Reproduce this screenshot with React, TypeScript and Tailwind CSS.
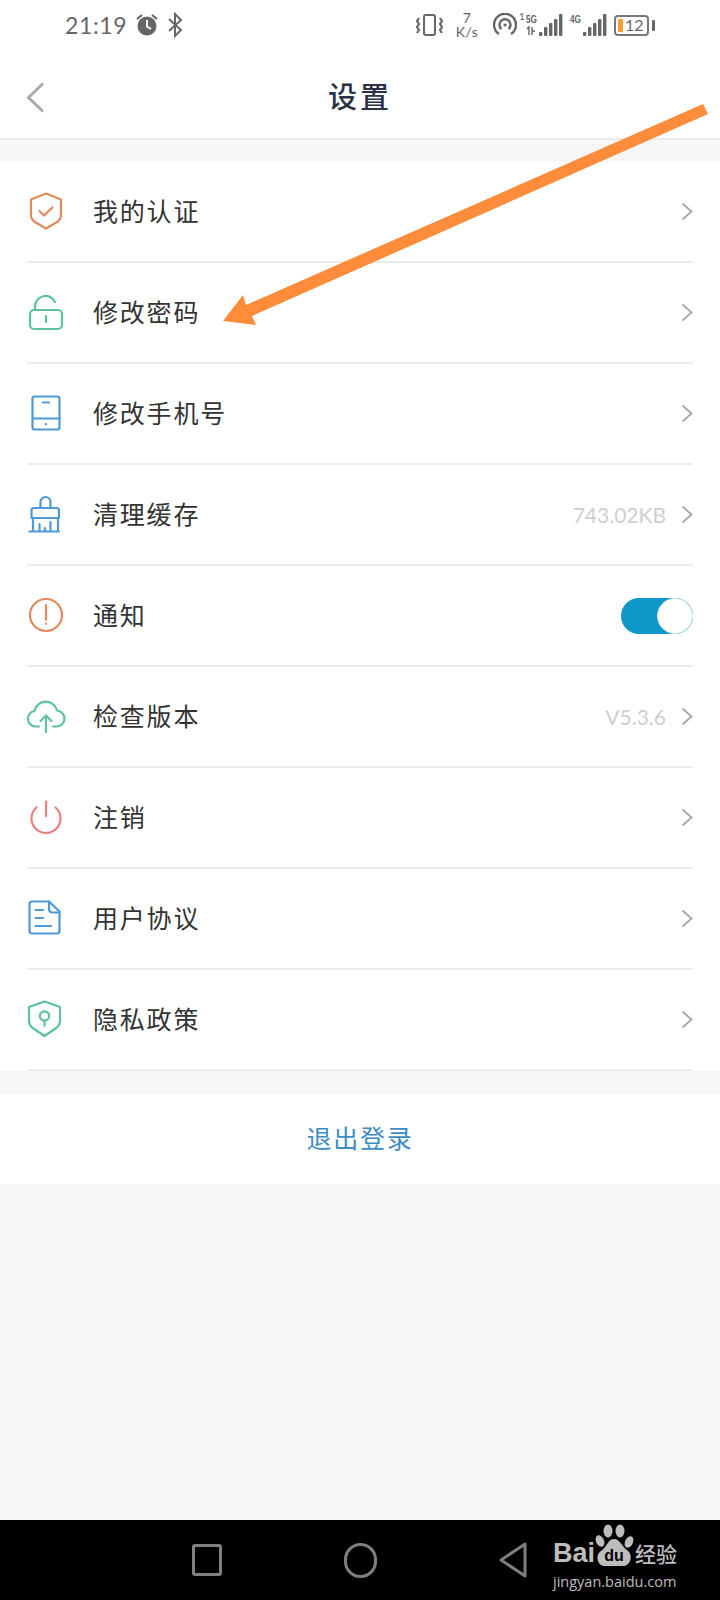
import React from 'react';

const CJK = "font-['Noto_Sans_CJK_SC','Noto_Sans_CJK_JP',sans-serif]";

const Chevron = () => (
  <svg width="12" height="19" viewBox="0 0 12 19" fill="none" stroke="#a3a6ad" strokeWidth="1.8" className="shrink-0">
    <path d="M1.5 1.5 L10.5 9.5 L1.5 17.5" />
  </svg>
);

const Icon: React.FC<{ color: string; children: React.ReactNode }> = ({ color, children }) => (
  <svg width="40" height="40" viewBox="0 0 40 40" fill="none" stroke={color} strokeWidth="2.2" strokeLinecap="round" strokeLinejoin="round" className="shrink-0">
    {children}
  </svg>
);

const icons: Record<string, React.ReactNode> = {
  auth: (
    <Icon color="#e08a5b">
      <path d="M20 1.5 L35 7.5 V24 Q35 27 32 29.5 L20 36.5 L8 29.5 Q5 27 5 24 V7.5 Z" />
      <path d="M13.5 19 L18 23.5 L26.5 15.5" />
    </Icon>
  ),
  password: (
    <Icon color="#5cc2a2">
      <rect x="4" y="17" width="32" height="19" rx="4" />
      <path d="M9 17 V13.5 A10.5 10.5 0 0 1 29 9" />
      <path d="M20 23 V29" />
    </Icon>
  ),
  phone: (
    <Icon color="#4f9ad4">
      <rect x="6.5" y="2.5" width="27" height="33" rx="2" />
      <path d="M6.5 24.5 H33.5" />
      <path d="M17 8.5 H23" />
      <path d="M19.7 30.2 H20" />
    </Icon>
  ),
  cache: (
    <Icon color="#4f9ad4">
      <path d="M14.5 13 V7 A5 5 0 0 1 24.5 7 V13" />
      <path d="M8 13 H31 Q33 13 33 15.5 V23 H5.5 V15.5 Q5.5 13 8 13 Z" />
      <path d="M7 23 V36.5 M32 23 V36.5 M3.5 36.5 H33" />
      <path d="M13.5 29 V36 M24.5 27 V36 M19 33 V36" />
    </Icon>
  ),
  notify: (
    <Icon color="#e08a5b">
      <circle cx="20" cy="19" r="16" />
      <path d="M20 9 V24" />
      <path d="M20 27.5 V27.8" />
    </Icon>
  ),
  version: (
    <Icon color="#5cc2a2">
      <path d="M13 29.5 H10 A7.8 7.8 0 0 1 8.5 14 A11.5 11.5 0 0 1 31 13.5 A8 8 0 0 1 30 29.5 H27" />
      <path d="M20 35 V19 M14.5 24 L20 18.5 L25.5 24" />
    </Icon>
  ),
  logoff: (
    <Icon color="#e88080">
      <path d="M10.5 9.5 A14.5 14.5 0 1 0 29.5 9.5" />
      <path d="M20 3.5 V18" />
    </Icon>
  ),
  agreement: (
    <Icon color="#4f9ad4">
      <path d="M23 2.5 H6 Q3.5 2.5 3.5 5 V32 Q3.5 34.5 6 34.5 H31 Q33.5 34.5 33.5 32 V12.5 Z" />
      <path d="M23 2.5 V10 Q23 13.5 27 13.5 H33.5" />
      <path d="M9.5 11 H17 M9.5 19 H17 M9.5 27 H25" />
    </Icon>
  ),
  privacy: (
    <Icon color="#5cc2a2">
      <path d="M18.5 1.5 L34 7 V21 Q34 25 31 27.5 L18.5 36 L6 27.5 Q3 25 3 21 V7 Z" />
      <circle cx="18.5" cy="16" r="4.6" />
      <path d="M18.5 20.5 V26" />
    </Icon>
  ),
};

const rows: { key: string; label: string; value?: string; toggle?: boolean }[] = [
  { key: 'auth', label: '我的认证' },
  { key: 'password', label: '修改密码' },
  { key: 'phone', label: '修改手机号' },
  { key: 'cache', label: '清理缓存', value: '743.02KB' },
  { key: 'notify', label: '通知', toggle: true },
  { key: 'version', label: '检查版本', value: 'V5.3.6' },
  { key: 'logoff', label: '注销' },
  { key: 'agreement', label: '用户协议' },
  { key: 'privacy', label: '隐私政策' },
];

const Signal: React.FC<{ top: string; five?: boolean }> = ({ top, five }) => (
  <svg width="37" height="24" viewBox="0 0 37 24" className="shrink-0" fill="#666">
    <text x="0" y="10" fontSize="10" fontWeight="700" textLength="11" lengthAdjust="spacingAndGlyphs" fontFamily="Liberation Sans, sans-serif">{top}</text>
    {five && <path d="M1 16 L3 14 V22 M6 14 V22 M6 18 L9 18" stroke="#666" strokeWidth="1.4" fill="none" />}
    <rect x="13" y="19" width="3.4" height="4" rx="1" />
    <rect x="18" y="14" width="3.4" height="9" rx="1" />
    <rect x="23" y="10" width="3.4" height="13" rx="1" />
    <rect x="28" y="6" width="3.4" height="17" rx="1" />
    <rect x="33" y="1" width="3.4" height="22" rx="1" />
  </svg>
);

const StatusBar = () => (
  <div className="h-[50px] flex items-center justify-between pl-[65px] pr-[65px] text-[#666]">
    <div className="flex items-center gap-[8px]">
      <span className="font-['Lato',sans-serif] text-[23px] leading-none tracking-[0.6px]">21:19</span>
      <svg width="24" height="24" viewBox="0 0 24 24" className="shrink-0">
        <circle cx="12" cy="13" r="9.5" fill="#666" />
        <path d="M12 7 V13.5 L16 16" stroke="#fff" strokeWidth="2" fill="none" />
        <path d="M2 6 L7 2 M22 6 L17 2" stroke="#666" strokeWidth="2.2" />
      </svg>
      <svg width="16" height="26" viewBox="0 0 16 26" fill="none" stroke="#666" strokeWidth="2" className="shrink-0">
        <path d="M2 7 L14 18 L8 24 V2 L14 8 L2 19" />
      </svg>
    </div>
    <div className="flex items-center">
      <svg width="27" height="24" viewBox="0 0 27 24" fill="none" stroke="#666" strokeWidth="2" className="shrink-0">
        <rect x="8" y="2" width="11" height="20" rx="2" />
        <path d="M3 5 L1 8 L3 11 L1 14 L3 17 L1 20 M24 5 L26 8 L24 11 L26 14 L24 17 L26 20" strokeWidth="2.2" />
      </svg>
      <div className="ml-[12px] w-[24px] flex flex-col items-center font-['Lato',sans-serif] text-[14px] leading-[14px] tracking-[0.5px]">
        <span>7</span>
        <span>K/s</span>
      </div>
      <svg width="24" height="24" viewBox="0 0 24 24" fill="none" stroke="#666" strokeWidth="2.4" className="ml-[14px] shrink-0">
        <path d="M6 21 A11 11 0 1 1 18 21" />
        <path d="M8.5 16 A5.5 5.5 0 1 1 15.5 16" />
        <circle cx="12" cy="12" r="1.6" fill="#666" stroke="none" />
      </svg>
      <span className="w-[9px] self-start text-[10px] leading-none pl-[2px] font-['Lato',sans-serif]">1</span>
      <Signal top="5G" five />
      <div className="ml-[7px]">
        <Signal top="4G" />
      </div>
      <div className="ml-[7px] w-[35px] h-[21px] border-2 border-[#777] rounded-[4px] flex items-center pl-[2px] gap-[2px]">
        <div className="w-[5px] h-[13px] bg-[#f0a030] rounded-[1px]" />
        <span className="font-['Lato',sans-serif] text-[16px] leading-none">12</span>
      </div>
      <div className="ml-[3px] w-[3px] h-[11px] bg-[#666] rounded-[1px]" />
    </div>
  </div>
);

const Row: React.FC<{ item: (typeof rows)[number] }> = ({ item }) => (
  <div className="h-[101px] flex flex-col">
    <div className="flex-1 flex items-center pl-[26px] pr-[27px]">
      {icons[item.key]}
      <span className={`ml-[27px] mb-[3px] text-[25px] leading-none tracking-[1.8px] text-[#333] ${CJK}`}>{item.label}</span>
      <div className="ml-auto flex items-center gap-[15px]">
        {item.value && <span className="font-['Lato',sans-serif] text-[21px] leading-none text-[#cfcfcf]">{item.value}</span>}
        {item.toggle ? (
          <div className="w-[72px] h-[36px] rounded-full bg-[#0e97c9] flex justify-end">
            <div className="w-[36px] h-[36px] rounded-full bg-white border border-[#cfe6ee]" />
          </div>
        ) : (
          <Chevron />
        )}
      </div>
    </div>
    <div className="h-[2px] mx-[27px] bg-[#ececec]" />
  </div>
);

export default function App() {
  return (
    <div className="relative w-[720px] h-[1600px] overflow-hidden bg-[#f7f7f7] flex flex-col">
      <div className="bg-white">
        <StatusBar />
        <div className="relative h-[90px] flex items-center justify-center border-b-2 border-[#ececec]">
          <svg width="19" height="31" viewBox="0 0 19 31" fill="none" stroke="#a8adb3" strokeWidth="3" className="absolute left-[26px] top-[32px]">
            <path d="M17 1.5 L2.5 15.5 L17 29.5" />
          </svg>
          <span className={`mt-[2px] text-[29px] leading-none font-medium tracking-[3px] text-[#2b3245] ${CJK}`}>设置</span>
        </div>
      </div>

      <div className="mt-[22px] bg-white">
        {rows.map(r => <Row key={r.key} item={r} />)}
      </div>

      <div className="mt-[23px] h-[90px] bg-white flex items-center justify-center">
        <span className={`mb-[3px] text-[25px] leading-none tracking-[1.8px] text-[#3d8cc4] ${CJK}`}>退出登录</span>
      </div>

      <div className="flex-1" />

      <div className="relative h-[80px] bg-black flex items-center pl-[192px] gap-[122px]">
        <div className="w-[30px] h-[32px] border-[3px] border-[#7f7f7f] rounded-[3px]" />
        <div className="w-[33px] h-[35px] border-[3px] border-[#7f7f7f] rounded-full" />
        <svg width="28" height="36" viewBox="0 0 28 36" fill="none" stroke="#7f7f7f" strokeWidth="3" strokeLinejoin="round">
          <path d="M26 2 V34 L2 18 Z" />
        </svg>

        {/* baidu watermark */}
        <div className="absolute left-[553px] top-[3px] w-[130px] h-[75px] text-[#bdbdbd]">
          <span className="absolute left-0 top-[15px] font-['Liberation_Sans',sans-serif] font-bold text-[27px] leading-[30px]">Bai</span>
          <svg width="42" height="46" viewBox="0 0 42 46" className="absolute left-[42px] top-0" fill="#bdbdbd">
            <ellipse cx="13" cy="8" rx="4.5" ry="6.5" />
            <ellipse cx="25" cy="8" rx="4.5" ry="6.5" />
            <ellipse cx="5" cy="18" rx="4" ry="6" transform="rotate(-25 5 18)" />
            <ellipse cx="34" cy="19" rx="4" ry="6" transform="rotate(25 34 19)" />
            <path d="M19 16 C25 16 27 24 33 28 C38 32 36 43 28 43 H10 C2 43 0 32 6 28 C12 24 13 16 19 16 Z" />
            <text x="19" y="38" textAnchor="middle" fontSize="16" fontWeight="700" fill="#000" fontFamily="Liberation Sans, sans-serif">du</text>
          </svg>
          <span className={`absolute left-[82px] top-[20px] text-[21px] leading-none font-medium whitespace-nowrap ${CJK}`}>经验</span>
          <span className="absolute left-0 top-[49px] font-['Open_Sans',sans-serif] text-[14.5px] leading-[20px] whitespace-nowrap">jingyan.baidu.com</span>
        </div>
      </div>

      {/* annotation arrow over the list */}
      <svg width="720" height="400" viewBox="0 0 720 400" className="absolute left-0 top-0 pointer-events-none">
        <path d="M703 104 L708 114 L252 316 L256 325 L223 321 L243 295 L246 305 Z" fill="#ff8c3a" />
      </svg>
    </div>
  );
}
